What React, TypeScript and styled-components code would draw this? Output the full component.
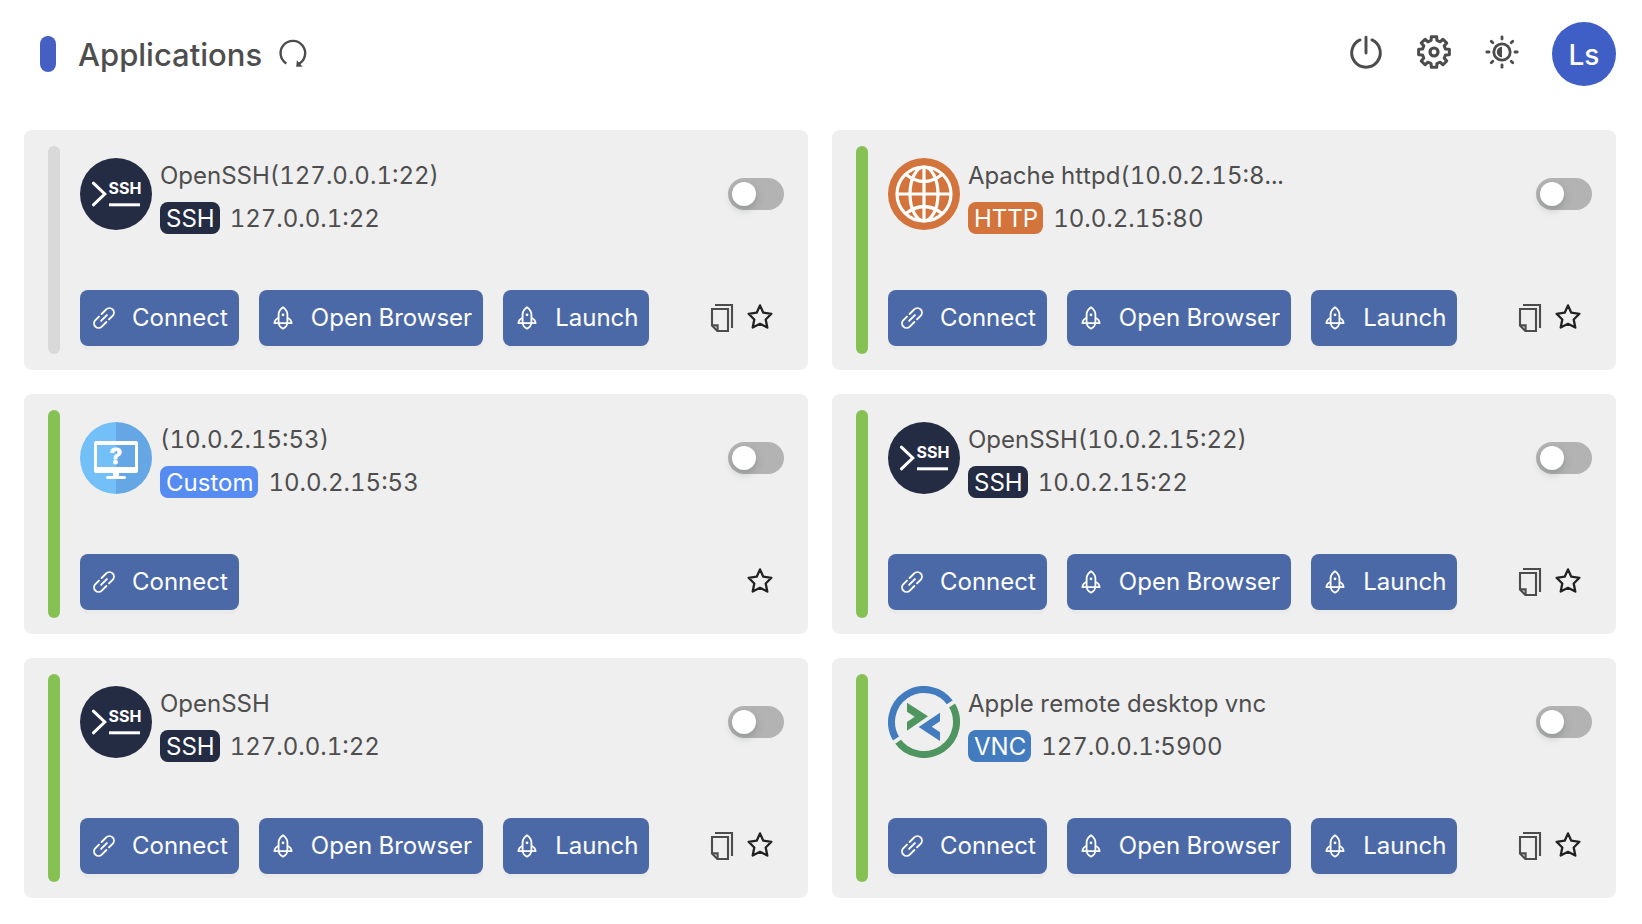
import React, { useState } from "react";
import styled, { createGlobalStyle } from "styled-components";

const GlobalStyle = createGlobalStyle`
  *, *::before, *::after { box-sizing: border-box; }
  body {
    margin: 0;
    background: #ffffff;
    color: #4e4e4e;
    font-family: Inter, "Liberation Sans", sans-serif;
    font-size: 24px;
    line-height: 34px;
    font-variant-numeric: tabular-nums;
    font-kerning: none;
  }
  button { font: inherit; border: 0; cursor: pointer; }
  svg { display: block; flex: none; }
`;

type Protocol = "SSH" | "HTTP" | "Custom" | "VNC";

interface Application {
  id: number;
  name: string;
  protocol: Protocol;
  address: string;
  online: boolean;
}

const protocolColor: Record<Protocol, string> = {
  SSH: "#242c44",
  HTTP: "#d2743c",
  Custom: "#568bf2",
  VNC: "#437bbf",
};

const applications: Application[] = [
  { id: 1, name: "OpenSSH(127.0.0.1:22)", protocol: "SSH", address: "127.0.0.1:22", online: false },
  { id: 2, name: "Apache httpd(10.0.2.15:80)", protocol: "HTTP", address: "10.0.2.15:80", online: true },
  { id: 3, name: "(10.0.2.15:53)", protocol: "Custom", address: "10.0.2.15:53", online: true },
  { id: 4, name: "OpenSSH(10.0.2.15:22)", protocol: "SSH", address: "10.0.2.15:22", online: true },
  { id: 5, name: "OpenSSH", protocol: "SSH", address: "127.0.0.1:22", online: true },
  { id: 6, name: "Apple remote desktop vnc", protocol: "VNC", address: "127.0.0.1:5900", online: true },
];

const MAX_NAME = 24;
const shorten = (name: string) => (name.length > MAX_NAME ? name.slice(0, MAX_NAME) + "..." : name);

/* ---------- layout ---------- */

const Page = styled.div`
  padding: 22px 26px 26px 24px;
`;

const Header = styled.header`
  display: flex;
  align-items: center;
  justify-content: space-between;
  height: 64px;
  margin-bottom: 44px;
`;

const Heading = styled.div`
  display: flex;
  align-items: center;
  padding-left: 16px;
`;

const Marker = styled.span`
  width: 16px;
  height: 36px;
  margin-right: 22px;
  border-radius: 8px;
  background: #465fc3;
`;

const Title = styled.h1`
  margin: 0 16px 0 0;
  padding-top: 2px;
  font-size: 31px;
  line-height: 40px;
  font-weight: 500;
  font-kerning: normal;
`;

const Tools = styled.div`
  display: flex;
  align-items: center;
  gap: 32px;
`;

const IconButton = styled.button<{ $color?: string }>`
  display: flex;
  align-items: center;
  justify-content: center;
  padding: 0;
  background: none;
  color: ${(p) => p.$color ?? "#4c4c4c"};
`;

const ToolButton = styled(IconButton)`
  width: 36px;
  height: 36px;
  margin-bottom: 4px;
`;

const Avatar = styled.button`
  width: 64px;
  height: 64px;
  padding: 2px 0 0;
  border-radius: 50%;
  background: #3f5fc7;
  color: #ffffff;
  font-size: 28px;
  font-weight: 500;
`;

const Grid = styled.main`
  display: grid;
  grid-template-columns: repeat(2, minmax(0, 1fr));
  gap: 24px;
`;

const Card = styled.article`
  display: flex;
  gap: 20px;
  min-height: 240px;
  padding: 16px 24px;
  border-radius: 8px;
  background: #efefef;
`;

const StatusBar = styled.span<{ $online: boolean }>`
  flex: none;
  width: 12px;
  border-radius: 6px;
  background: ${(p) => (p.$online ? "#86c154" : "#d9d9d9")};
`;

const CardBody = styled.div`
  display: flex;
  flex: 1;
  flex-direction: column;
  justify-content: space-between;
  min-width: 0;
  padding: 12px 0 8px;
`;

const Summary = styled.div`
  display: flex;
  align-items: flex-start;
  gap: 8px;
`;

const Details = styled.div`
  display: flex;
  flex: 1;
  flex-direction: column;
  gap: 8px;
  min-width: 0;
`;

const Name = styled.h2`
  margin: 0;
  font-size: 24px;
  font-weight: 400;
  line-height: 36px;
  white-space: nowrap;
`;

const AddressRow = styled.div`
  display: flex;
  height: 32px;
  gap: 10px;
`;

const Badge = styled.span<{ $color: string }>`
  padding: 0 5px 0 6px;
  border-radius: 8px;
  background: ${(p) => p.$color};
  color: #ffffff;
  font-kerning: normal;
`;

const Switch = styled.input`
  appearance: none;
  flex: none;
  width: 56px;
  height: 32px;
  margin: 20px 0 0;
  padding: 4px;
  border-radius: 16px;
  background: #b3b3b3;
  cursor: pointer;

  &::before {
    content: "";
    display: block;
    width: 24px;
    height: 24px;
    border-radius: 50%;
    background: #ffffff;
    box-shadow: 0 4px 8px rgba(0, 35, 11, 0.2);
  }
  &:checked { background: #4c69a7; }
  &:checked::before { margin-left: 24px; }
`;

const Actions = styled.div`
  display: flex;
  align-items: center;
  gap: 20px;
`;

const ActionButton = styled.button`
  display: flex;
  align-items: center;
  gap: 16px;
  height: 56px;
  padding: 0 11px 0 12px;
  border-radius: 8px;
  background: #4c69a7;
  color: #ffffff;
  white-space: nowrap;
  font-kerning: normal;
  box-shadow: 0 4px 0 rgba(0, 0, 0, 0.02);
`;

const CardTools = styled.div`
  display: flex;
  align-items: center;
  gap: 13px;
  margin-left: auto;
  padding-right: 11px;
`;

/* ---------- icons ---------- */

const RefreshIcon = () => (
  <svg width="30" height="30" viewBox="0 0 30 30" fill="none" stroke="currentColor" strokeWidth="2.4">
    <path d="M8.4 24.6A12.3 12.3 0 1 1 20.8 24.9" />
    <path d="M18.2 27.8L18.9 21.2L21.6 24.2L24.6 27.8Z" fill="currentColor" stroke="none" />
  </svg>
);

const PowerIcon = () => (
  <svg width="34" height="34" viewBox="0 0 34 34" fill="none" stroke="currentColor" strokeWidth="2.9" strokeLinecap="round">
    <path d="M11 4.9A14.3 14.3 0 1 0 23 4.9M17 2.3V18" />
  </svg>
);

const gearPath = (() => {
  const at = (r: number, deg: number) => {
    const a = (deg * Math.PI) / 180;
    return `${(18 + r * Math.cos(a)).toFixed(2)} ${(18 + r * Math.sin(a)).toFixed(2)}`;
  };
  const points: string[] = [];
  for (let i = 0; i < 8; i++) {
    const c = i * 45;
    points.push(at(11.9, c - 14), at(15.6, c - 10), at(15.6, c + 10), at(11.9, c + 14));
  }
  return `M${points.join("L")}Z`;
})();

const GearIcon = () => (
  <svg width="36" height="36" viewBox="0 0 36 36" fill="none" stroke="currentColor" strokeWidth="3" strokeLinejoin="round">
    <path d={gearPath} />
    <circle cx="18" cy="18" r="4" strokeWidth="3.2" />
  </svg>
);

const ThemeIcon = () => (
  <svg width="36" height="36" viewBox="0 0 36 36" fill="none" stroke="currentColor" strokeWidth="2.8" strokeLinecap="round">
    <circle cx="18" cy="18" r="8.2" />
    <path d="M18 12.8A5.2 5.2 0 0 0 18 23.2Z" fill="currentColor" stroke="none" />
    {[0, 45, 90, 135, 180, 225, 270, 315].map((deg) => (
      <path key={deg} d="M18 2.8V5" transform={`rotate(${deg} 18 18)`} />
    ))}
  </svg>
);

const LinkIcon = () => (
  <svg width="24" height="24" viewBox="0 0 24 24" fill="none" stroke="currentColor" strokeWidth="1.9" strokeLinecap="round">
    <path d="M9.6 8L14.2 3.4A4.5 4.5 0 0 1 20.6 9.8L17 13.4" />
    <path d="M14.4 16L9.8 20.6A4.5 4.5 0 0 1 3.4 14.2L7 10.6" />
    <path d="M9.1 14.9L14.9 9.1" />
  </svg>
);

const RocketIcon = () => (
  <svg width="24" height="24" viewBox="0 0 24 24" fill="none" stroke="currentColor" strokeWidth="1.8" strokeLinejoin="round">
    <path d="M7.6 17.2V8.2C7.6 5.2 9.8 2.8 12 1.2C14.2 2.8 16.4 5.2 16.4 8.2V17.2" />
    <path d="M7.6 11.8C5 13 3.6 14.6 3.4 17.2H20.6C20.4 14.6 19 13 16.4 11.8" />
    <path d="M7.9 17.2C8 20 9.8 21.6 12 22.6C14.2 21.6 16 20 16.1 17.2" />
    <circle cx="12" cy="8.8" r="1.4" fill="currentColor" stroke="none" />
  </svg>
);

const CopyIcon = () => (
  <svg width="24" height="28" viewBox="0 0 24 28" fill="none" stroke="currentColor" strokeWidth="2.1">
    <path d="M5 1H22V24" />
    <path d="M2 5H18V27H7.4L2 21.6Z" />
    <path d="M2 21.4H7.6V27" />
  </svg>
);

const StarIcon = () => (
  <svg width="26" height="28" viewBox="0 1 26 28" fill="none" stroke="currentColor" strokeWidth="2.3" strokeLinejoin="round">
    <path d="M13 2.4L16.3 9.7L24.4 10.8L18.7 16.5L20.3 24.5L13 20.8L5.7 24.5L7.3 16.5L1.6 10.8L9.7 9.7Z" />
  </svg>
);

const SvgLabel = styled.text`
  fill: #ffffff;
  font-weight: 700;
  text-anchor: middle;
`;

const SshLogo = () => (
  <svg width="72" height="72" viewBox="0 0 72 72" fill="none" stroke="#ffffff" strokeWidth="3">
    <circle cx="36" cy="36" r="36" fill="#242c44" stroke="none" />
    <path d="M13.4 25.2L24.8 36L13.4 46.8" strokeLinecap="round" />
    <path d="M29 46.8H60" />
    <SvgLabel x="45" y="36" fontSize="16" stroke="none">SSH</SvgLabel>
  </svg>
);

const HttpLogo = () => (
  <svg width="72" height="72" viewBox="0 0 72 72" fill="none" stroke="#ffffff" strokeWidth="3.2">
    <circle cx="36" cy="36" r="36" fill="#d2743c" stroke="none" />
    <circle cx="36" cy="36" r="27" />
    <ellipse cx="36" cy="36" rx="14" ry="27" />
    <path d="M36 9V63M9 36H63M18 16.5Q36 30.5 54 16.5M18 55.5Q36 41.5 54 55.5" />
  </svg>
);

const CustomLogo = () => (
  <svg width="72" height="72" viewBox="0 0 72 72">
    <path d="M36 0A36 36 0 0 0 36 72Z" fill="#73bff8" />
    <path d="M36 0A36 36 0 0 1 36 72Z" fill="#65a7e5" />
    <path
      d="M16 19H56A2 2 0 0 1 58 21V49A2 2 0 0 1 56 51H39V54H44.5A1.3 1.3 0 0 1 44.5 57H27.5A1.3 1.3 0 0 1 27.5 54H33V51H16A2 2 0 0 1 14 49V21A2 2 0 0 1 16 19ZM17 23V45H55V23Z"
      fill="#ffffff"
      fillRule="evenodd"
    />
    <SvgLabel x="36" y="42" fontSize="22" stroke="#ffffff" strokeWidth="0.8">?</SvgLabel>
  </svg>
);

const VncLogo = () => (
  <svg width="72" height="72" viewBox="0 0 72 72" fill="none">
    <g transform="rotate(-34 36 36)" strokeWidth="7">
      <path d="M3.5 36A32.5 32.5 0 0 1 68.5 36" stroke="#437bbf" />
      <path d="M3.5 36A32.5 32.5 0 0 0 68.5 36" stroke="#4f9560" />
      <path d="M-1 36H73" stroke="#efefef" strokeWidth="4" />
    </g>
    <path d="M19 16.7L40 30.3L19 44.7V36L26.7 30.7L19 25.7Z" fill="#4f9560" />
    <path d="M52 26.7V35.3L43.7 40.7L52 46.3V55L30.7 41Z" fill="#437bbf" />
  </svg>
);

const logos: Record<Protocol, React.FC> = {
  SSH: SshLogo,
  HTTP: HttpLogo,
  Custom: CustomLogo,
  VNC: VncLogo,
};

/* ---------- components ---------- */

function ApplicationCard({ app }: { app: Application }) {
  const [enabled, setEnabled] = useState(false);
  const Logo = logos[app.protocol];
  const launchable = app.protocol !== "Custom";

  return (
    <Card>
      <StatusBar $online={app.online} />
      <CardBody>
        <Summary>
          <Logo />
          <Details>
            <Name title={app.name}>{shorten(app.name)}</Name>
            <AddressRow>
              <Badge $color={protocolColor[app.protocol]}>{app.protocol}</Badge>
              <span>{app.address}</span>
            </AddressRow>
          </Details>
          <Switch
            type="checkbox"
            role="switch"
            aria-label={`Enable ${app.name}`}
            checked={enabled}
            onChange={(e) => setEnabled(e.target.checked)}
          />
        </Summary>
        <Actions>
          <ActionButton type="button"><LinkIcon />Connect</ActionButton>
          {launchable && (
            <>
              <ActionButton type="button"><RocketIcon />Open Browser</ActionButton>
              <ActionButton type="button"><RocketIcon />Launch</ActionButton>
            </>
          )}
          <CardTools>
            {launchable && <IconButton type="button" aria-label="Copy"><CopyIcon /></IconButton>}
            <IconButton type="button" aria-label="Favorite" $color="#222222"><StarIcon /></IconButton>
          </CardTools>
        </Actions>
      </CardBody>
    </Card>
  );
}

export default function App() {
  return (
    <>
      <GlobalStyle />
      <Page>
        <Header>
          <Heading>
            <Marker />
            <Title>Applications</Title>
            <IconButton type="button" aria-label="Refresh"><RefreshIcon /></IconButton>
          </Heading>
          <Tools>
            <ToolButton type="button" aria-label="Power"><PowerIcon /></ToolButton>
            <ToolButton type="button" aria-label="Settings"><GearIcon /></ToolButton>
            <ToolButton type="button" aria-label="Theme"><ThemeIcon /></ToolButton>
            <Avatar type="button" aria-label="Account Ls">Ls</Avatar>
          </Tools>
        </Header>
        <Grid>
          {applications.map((app) => (
            <ApplicationCard key={app.id} app={app} />
          ))}
        </Grid>
      </Page>
    </>
  );
}
